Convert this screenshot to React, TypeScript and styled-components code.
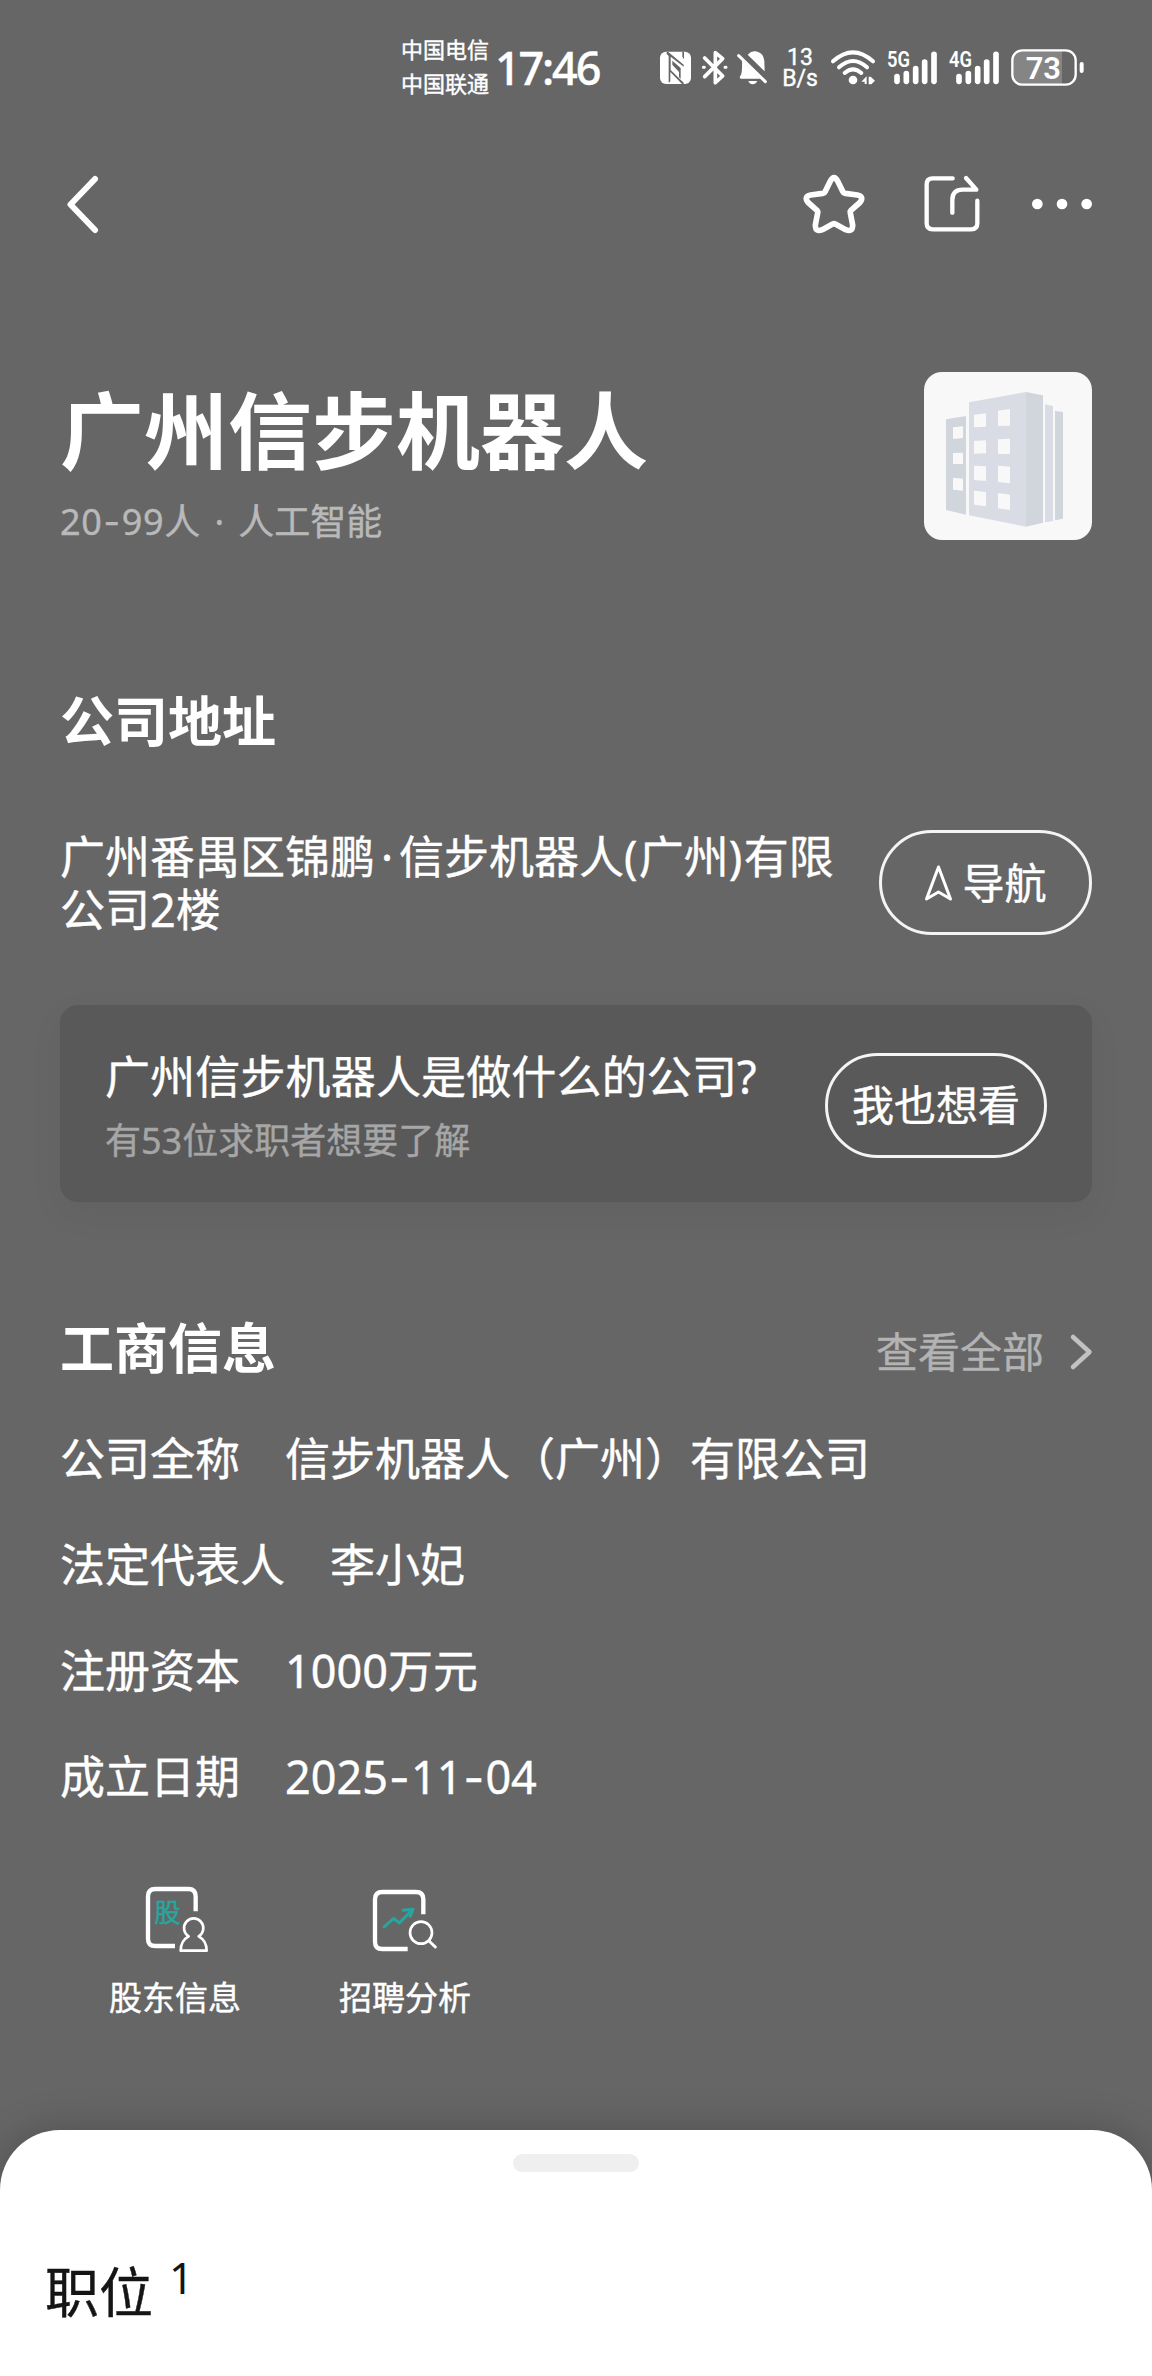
import React from 'react';
import styled, { createGlobalStyle } from 'styled-components';

const GlobalStyle = createGlobalStyle`
  * { box-sizing: border-box; }
  body {
    margin: 0;
    background: #666666;
    color: #ffffff;
    font-family: "Noto Sans", "Noto Sans CJK SC", sans-serif;
    -webkit-text-stroke: 0.4px currentColor;
  }
  h1, h2, p, dl, dt, dd { margin: 0; font-weight: 400; }
  svg { display: block; flex: none; overflow: visible; -webkit-text-stroke: 0; }
`;

const Screen = styled.div`
  display: flex;
  flex-direction: column;
  width: 1152px;
  height: 2376px;
  overflow: hidden;
  background: #666666;
`;

/* Status bar */

const StatusBar = styled.header`
  display: flex;
  align-items: center;
  height: 136px;
  padding: 0 68px 0 401px;
`;

const Carriers = styled.div`
  display: flex;
  flex-direction: column;
  width: 94px;
  font-size: 22px;
  line-height: 33.5px;
  padding-bottom: 3px;
`;

const Clock = styled.time`
  font-size: 45px;
  font-weight: 500;
  letter-spacing: -2.2px;
  line-height: 60px;
`;

const StatusIcons = styled.div`
  display: flex;
  align-items: center;
  gap: 8px;
  margin-left: auto;
`;

const NetSpeed = styled.div`
  display: flex;
  flex-direction: column;
  width: 44px;
  font-family: Roboto, sans-serif;
  font-size: 23px;
  line-height: 21px;
  text-align: center;
`;

/* Navigation */

const NavBar = styled.nav`
  display: flex;
  align-items: center;
  justify-content: space-between;
  height: 136px;
  padding: 0 60px;
`;

const NavActions = styled.div`
  display: flex;
  align-items: center;
  gap: 52px;
`;

const StarSlot = styled.span`
  margin-right: 6px;
`;

/* Content */

const Content = styled.main`
  display: flex;
  flex-direction: column;
  padding: 100px 60px 0;
`;

const Hero = styled.section`
  display: flex;
  justify-content: space-between;
  height: 168px;
`;

const HeroText = styled.div`
  padding-top: 9px;
`;

const CompanyName = styled.h1`
  font-size: 84px;
  font-weight: 700;
  line-height: 100px;
  -webkit-text-stroke: 0;
`;

const CompanyMeta = styled.p`
  margin-top: 19px;
  font-size: 36px;
  line-height: 44px;
  color: #b9b9b9;
`;

const Headcount = styled.span`
  letter-spacing: 0.7px;
`;

const Dash = styled.span`
  padding: 0 0.025em;
  font-family: Inter, sans-serif;
`;

const Logo = styled.div`
  width: 168px;
  height: 168px;
  border-radius: 18px;
  background: #f8f8f8;
  overflow: hidden;
`;

const SectionHead = styled.div<{ $top: number }>`
  display: flex;
  align-items: center;
  justify-content: space-between;
  height: 64px;
  margin-top: ${(p) => p.$top}px;
`;

const SectionTitle = styled.h2`
  font-size: 54px;
  font-weight: 700;
  line-height: 64px;
  -webkit-text-stroke: 0;
`;

const MoreLink = styled.a`
  display: flex;
  align-items: center;
  gap: 26px;
  padding-top: 7px;
  font-size: 42px;
  line-height: 56px;
  color: #b3b3b3;
`;

const AddressRow = styled.section`
  display: flex;
  align-items: center;
  justify-content: space-between;
  height: 105px;
  margin-top: 77px;
`;

const Address = styled.p`
  font-size: 45px;
  line-height: 53px;
  white-space: nowrap;
`;

const MidDot = styled.span<{ $width: number }>`
  display: inline-block;
  width: ${(p) => p.$width}px;
  text-align: center;
`;

const Paren = styled.span`
  letter-spacing: 1.3px;
`;

const PillButton = styled.button<{ $width: number }>`
  display: flex;
  align-items: center;
  justify-content: center;
  gap: 9px;
  width: ${(p) => p.$width}px;
  height: 105px;
  padding: 0;
  border: 3px solid #f4f4f4;
  border-radius: 53px;
  background: transparent;
  color: #ffffff;
  font-family: inherit;
  font-size: 42px;
  line-height: 56px;
`;

const AskCard = styled.section`
  display: flex;
  align-items: center;
  justify-content: space-between;
  height: 197px;
  margin-top: 70px;
  padding: 3px 45px 0;
  border-radius: 18px;
  background: #595959;
  box-shadow: 0 12px 36px rgba(0, 0, 0, 0.05);
`;

const AskTitle = styled.p`
  font-size: 45px;
  line-height: 64px;
  letter-spacing: 0.15px;
`;

const AskNote = styled.p`
  margin-top: 7px;
  font-size: 36px;
  line-height: 50px;
  color: #a6a6a6;
`;

const InfoList = styled.dl`
  display: flex;
  flex-direction: column;
  gap: 42px;
  margin-top: 47px;
`;

const InfoRow = styled.div`
  display: flex;
  gap: 45px;
  font-size: 45px;
  line-height: 64px;
`;

const Tools = styled.div`
  display: flex;
  margin-top: 71px;
`;

const Tool = styled.div`
  display: flex;
  flex-direction: column;
  align-items: center;
  gap: 19px;
  width: 230px;
  font-size: 33px;
  line-height: 44px;
`;

/* Bottom sheet */

const Sheet = styled.section`
  display: flex;
  flex-direction: column;
  height: 246px;
  margin-top: auto;
  padding-top: 24px;
  border-radius: 60px 60px 0 0;
  background: #ffffff;
  box-shadow: 0 0 42px rgba(0, 0, 0, 0.22);
  color: #151515;
`;

const Handle = styled.div`
  align-self: center;
  width: 126px;
  height: 18px;
  border-radius: 9px;
  background: #efefef;
`;

const SheetTitle = styled.div`
  display: flex;
  align-items: flex-start;
  gap: 16px;
  padding: 88px 0 0 45px;
  font-size: 54px;
  line-height: 64px;
`;

const Count = styled.span`
  margin-top: -12px;
  font-size: 43px;
  line-height: 60px;
  -webkit-text-stroke: 0;
`;

const NfcIcon = () => (
  <svg width="35" height="40" viewBox="54 54 105 120">
    <rect x="60" y="65" width="93" height="97" rx="18" fill="#fff" />
    <path fill="#666" d="M80 65L84 65L131 104V110L92 80V120L131 158V162H126L91 126V154L86 159L86 78L80 72Z" />
    <path fill="#666" d="M97 92L122 114V146L117 142V126L97 104ZM127 65H132V88L127 80Z" />
  </svg>
);

const BluetoothIcon = () => (
  <svg width="27" height="40" viewBox="183 54 81 120">
    <path fill="none" stroke="#fff" strokeWidth="11" strokeLinecap="round" strokeLinejoin="round" d="M194 84L248 138L226 158V68L248 86L194 140" />
    <path stroke="#fff" strokeWidth="9" strokeLinecap="round" d="M190 112H193M255 112H258" />
  </svg>
);

const BellOffIcon = () => (
  <svg width="34" height="40" viewBox="288 54 102 120">
    <path fill="#fff" d="M323 74Q334 62 347 64Q371 69 373 92L374 124ZM306 91L361 146H302Q296 143 303 134Q307 126 306 91ZM325 153H352Q347 163 338 163Q329 163 325 153Z" />
    <path stroke="#fff" strokeWidth="9" strokeLinecap="round" d="M296 77L376 155" />
  </svg>
);

const WifiIcon = () => (
  <svg width="46" height="40" viewBox="570 54 138 120">
    <g fill="none" stroke="#fff" strokeWidth="12" strokeLinecap="round">
      <path d="M579 94Q639 40 699 94" />
      <path d="M597 112Q639 74 681 112" />
      <path d="M614 129Q639 107 664 129" />
    </g>
    <circle cx="639" cy="150" r="13" fill="#fff" />
    <path fill="#fff" d="M664 155L680 139V162H674V155ZM686 140H692L705 152L694 163H686Z" />
  </svg>
);

const BARS = [
  [771, 136],
  [799, 127],
  [827, 112],
  [854, 92],
  [882, 69],
];

const SignalIcon = ({ label }: { label: string }) => (
  <svg width="54" height="40" viewBox="732 54 162 120">
    <g stroke="#fff" strokeWidth="17" strokeLinecap="round">
      {BARS.map(([x, top]) => (
        <path key={x} d={`M${x} ${top + 4}V154`} />
      ))}
    </g>
    <text x="741" y="111" fill="#fff" fontFamily="Roboto, sans-serif" fontWeight="600" fontSize="66" textLength="69" lengthAdjust="spacingAndGlyphs">
      {label}
    </text>
  </svg>
);

const BatteryIcon = () => (
  <svg width="76" height="40" viewBox="1104 54 228 120">
    <path fill="#858585" d="M1146 62H1266V162H1146Q1118 162 1118 134V90Q1118 62 1146 62Z" />
    <rect x="1117" y="61" width="190" height="103" rx="30" fill="none" stroke="#fff" strokeWidth="7" />
    <rect x="1319" y="96" width="12" height="33" rx="6" fill="#fff" />
    <text x="1157" y="147" fill="#fff" fontFamily="Roboto, sans-serif" fontWeight="600" fontSize="96" textLength="106" lengthAdjust="spacingAndGlyphs">
      73
    </text>
  </svg>
);

const BackIcon = () => (
  <svg width="40" height="60" viewBox="60 174 40 60">
    <path fill="none" stroke="#fff" strokeWidth="6" strokeLinecap="round" strokeLinejoin="round" d="M95 179L70.5 204.5L95 230" />
  </svg>
);

const StarIcon = () => (
  <svg width="64" height="60" viewBox="66 72 192 180">
    <path
      fill="none"
      stroke="#fff"
      strokeWidth="17"
      strokeLinejoin="round"
      d="M150 95Q162 71 174 95L188 124Q190 129 196 130L232 135Q255 140 238 159L213 181Q210 184 211 189L218 225Q218 248 197 239L166 222Q162 220 158 222L127 239Q106 248 106 225L113 189Q114 184 111 181L86 159Q69 140 92 135L128 130Q134 129 136 124Z"
    />
  </svg>
);

const ShareIcon = () => (
  <svg width="56" height="60" viewBox="431 72 168 180">
    <g fill="none" stroke="#fff" strokeWidth="13" strokeLinecap="round" strokeLinejoin="round">
      <path d="M517 85H457Q439 85 439 103V220Q439 238 457 238H573Q591 238 591 220V152" />
      <path d="M516 188V150Q516 119 547 119H588L557 84" />
    </g>
  </svg>
);

const MoreIcon = () => (
  <svg width="60" height="60" viewBox="756 72 180 180">
    <g fill="#fff">
      <circle cx="772" cy="162" r="16" />
      <circle cx="846" cy="162" r="16" />
      <circle cx="920" cy="162" r="16" />
    </g>
  </svg>
);

const BuildingIcon = () => (
  <svg width="168" height="168" viewBox="72 66 504 504">
    <path fill="#d1d5dc" d="M138 208L198 198V494L138 480ZM378 126L429 136V518L378 530ZM465 183L489 186V506L465 511Z" />
    <path fill="#d9dce4" d="M207 157L378 126V530L207 496ZM435 163L459 168V513L435 517Z" />
    <path
      fill="#f8f8f8"
      d="M159 232L189 229V264L159 267ZM159 309L189 308V342H159ZM159 383L189 386V422L159 419ZM222 194L258 190V230L222 232ZM294 182L330 177V227L294 228ZM222 273L258 271V310L222 311ZM294 268L330 266V312H294ZM222 347L258 349V393L222 390ZM294 347L330 350V400L294 396ZM222 422L258 426V469L222 464ZM294 429L330 434V480L294 475Z"
    />
  </svg>
);

const NavigateIcon = () => (
  <svg width="29" height="38" viewBox="0 0 29 38">
    <path fill="none" stroke="#fff" strokeWidth="3" strokeLinejoin="round" d="M14.5 3L26.5 35L14.5 28L2.5 35Z" />
  </svg>
);

const ChevronIcon = () => (
  <svg width="22" height="36" viewBox="0 0 22 36">
    <path fill="none" stroke="#c2c2c2" strokeWidth="4.500" strokeLinecap="round" strokeLinejoin="round" d="M3 3L19.500 18L3 33" />
  </svg>
);

const ShareholderIcon = () => (
  <svg width="76" height="76" viewBox="141 30 228 228">
    <path fill="none" stroke="#fff" strokeWidth="13" d="M317 121V76Q317 54 295 54H196Q174 54 174 76V203Q174 225 196 225H255" />
    <path fill="none" stroke="#fff" strokeWidth="8" strokeLinejoin="round" d="M296 196A29 29 0 1 1 326 196Q350 209 350 239H272Q272 209 296 196Z" />
    <text x="193" y="153" fill="#26a69f" stroke="#26a69f" strokeWidth="1.500" fontFamily="'Noto Sans CJK SC', sans-serif" fontSize="79">
      股
    </text>
  </svg>
);

const AnalysisIcon = () => (
  <svg width="76" height="76" viewBox="831 30 228 228">
    <path fill="none" stroke="#fff" strokeWidth="13" d="M1000 130V85Q1000 63 978 63H877Q855 63 855 85V212Q855 234 877 234H953" />
    <circle cx="993" cy="185" r="33" fill="none" stroke="#fff" strokeWidth="8" />
    <path stroke="#fff" strokeWidth="9" strokeLinecap="round" d="M1017 210L1036 228" />
    <path fill="none" stroke="#26a69f" strokeWidth="9" strokeLinecap="round" strokeLinejoin="round" d="M882 168L911 142L928 156L962 122M939 118L969 115L961 136" />
  </svg>
);

const INFO: [string, React.ReactNode][] = [
  ['公司全称', '信步机器人（广州）有限公司'],
  ['法定代表人', '李小妃'],
  ['注册资本', '1000万元'],
  ['成立日期', <>2025<Dash>-</Dash>11<Dash>-</Dash>04</>],
];

export default function App() {
  return (
    <Screen>
      <GlobalStyle />
      <StatusBar>
        <Carriers>
          <span>中国电信</span>
          <span>中国联通</span>
        </Carriers>
        <Clock>17:46</Clock>
        <StatusIcons>
          <NfcIcon />
          <BluetoothIcon />
          <BellOffIcon />
          <NetSpeed>
            <span>13</span>
            <span>B/s</span>
          </NetSpeed>
          <WifiIcon />
          <SignalIcon label="5G" />
          <SignalIcon label="4G" />
          <BatteryIcon />
        </StatusIcons>
      </StatusBar>

      <NavBar>
        <BackIcon />
        <NavActions>
          <StarSlot>
            <StarIcon />
          </StarSlot>
          <ShareIcon />
          <MoreIcon />
        </NavActions>
      </NavBar>

      <Content>
        <Hero>
          <HeroText>
            <CompanyName>广州信步机器人</CompanyName>
            <CompanyMeta>
              <Headcount>20<Dash>-</Dash>99</Headcount>人<MidDot $width={38}>·</MidDot>人工智能
            </CompanyMeta>
          </HeroText>
          <Logo>
            <BuildingIcon />
          </Logo>
        </Hero>

        <SectionHead $top={149}>
          <SectionTitle>公司地址</SectionTitle>
        </SectionHead>
        <AddressRow>
          <Address>
            广州番禺区锦鹏<MidDot $width={24}>·</MidDot>信步机器人<Paren>(</Paren>广州<Paren>)</Paren>有限
            <br />
            公司2楼
          </Address>
          <PillButton $width={213}>
            <NavigateIcon />
            导航
          </PillButton>
        </AddressRow>

        <AskCard>
          <div>
            <AskTitle>广州信步机器人是做什么的公司?</AskTitle>
            <AskNote>有53位求职者想要了解</AskNote>
          </div>
          <PillButton $width={222}>我也想看</PillButton>
        </AskCard>

        <SectionHead $top={114}>
          <SectionTitle>工商信息</SectionTitle>
          <MoreLink>
            查看全部
            <ChevronIcon />
          </MoreLink>
        </SectionHead>
        <InfoList>
          {INFO.map(([label, value]) => (
            <InfoRow key={label}>
              <dt>{label}</dt>
              <dd>{value}</dd>
            </InfoRow>
          ))}
        </InfoList>

        <Tools>
          <Tool>
            <ShareholderIcon />
            股东信息
          </Tool>
          <Tool>
            <AnalysisIcon />
            招聘分析
          </Tool>
        </Tools>
      </Content>

      <Sheet>
        <Handle />
        <SheetTitle>
          职位
          <Count>1</Count>
        </SheetTitle>
      </Sheet>
    </Screen>
  );
}
